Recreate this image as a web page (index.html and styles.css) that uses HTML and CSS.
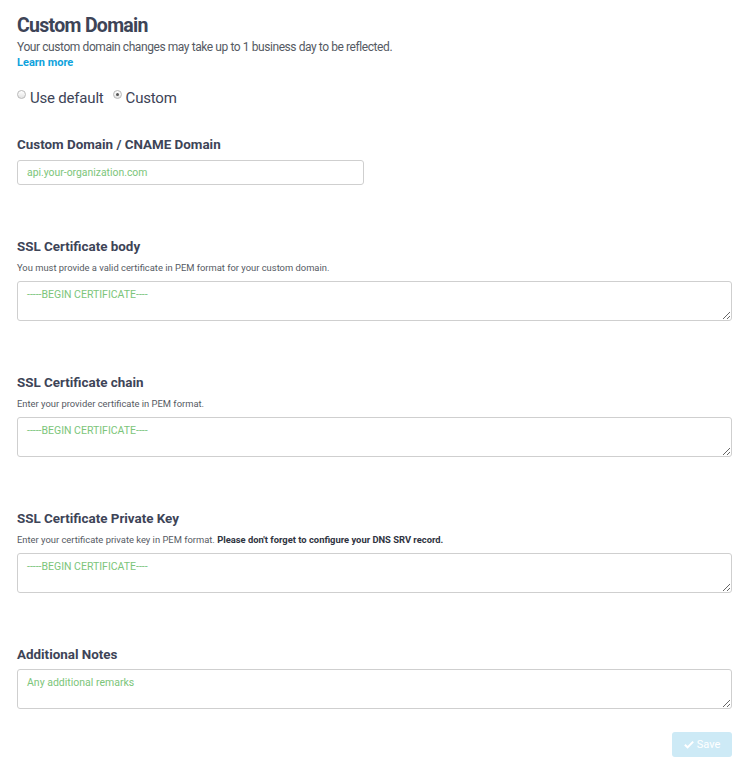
FILE: index.html
```html
<!DOCTYPE html>
<html lang="en">
<head>
<meta charset="utf-8">
<title>Custom Domain</title>
<link rel="stylesheet" href="styles.css">
</head>
<body>
<div class="page">
  <h1 class="title">Custom Domain</h1>
  <p class="intro">Your custom domain changes may take up to 1 business day to be reflected.</p>
  <a class="learn" href="#">Learn more</a>

  <div class="radios">
    <label class="radio"><input type="radio" name="mode"><span>Use default</span></label>
    <label class="radio"><input type="radio" name="mode" checked><span>Custom</span></label>
  </div>

  <div class="field first">
    <label class="flabel">Custom Domain / CNAME Domain</label>
    <input class="text" type="text" placeholder="api.your-organization.com">
  </div>

  <div class="field">
    <label class="flabel">SSL Certificate body</label>
    <p class="help">You must provide a valid certificate in PEM format for your custom domain.</p>
    <textarea class="area" placeholder="-----BEGIN CERTIFICATE----"></textarea>
  </div>

  <div class="field">
    <label class="flabel">SSL Certificate chain</label>
    <p class="help">Enter your provider certificate in PEM format.</p>
    <textarea class="area" placeholder="-----BEGIN CERTIFICATE----"></textarea>
  </div>

  <div class="field">
    <label class="flabel">SSL Certificate Private Key</label>
    <p class="help">Enter your certificate private key in PEM format. <strong>Please don't forget to configure your DNS SRV record.</strong></p>
    <textarea class="area" placeholder="-----BEGIN CERTIFICATE----"></textarea>
  </div>

  <div class="field">
    <label class="flabel">Additional Notes</label>
    <textarea class="area" placeholder="Any additional remarks"></textarea>
  </div>

  <div class="actions">
    <button class="save" type="button" disabled>
      <svg class="check" viewBox="0 0 12 10" width="10" height="9" aria-hidden="true"><path d="M1 5.2 L4.3 8.4 L11 1.6" fill="none" stroke="#fff" stroke-width="2.4"/></svg>
      <span>Save</span>
    </button>
  </div>
</div>
</body>
</html>
```
FILE: styles.css
```css
* { box-sizing: border-box; }
html, body { margin: 0; padding: 0; background: #fff; }
body {
  font-family: Roboto, "Liberation Sans", Arial, sans-serif;
  color: #3d4457;
}
.page {
  padding: 14px 17px 20px 17px;
  display: flex;
  flex-direction: column;
  align-items: flex-start;
}
.title {
  margin: 0;
  font-size: 19.5px;
  line-height: 24px;
  font-weight: 700;
  letter-spacing: -0.7px;
  color: #3d4457;
}
.intro {
  margin: 1px 0 0 0;
  font-size: 12px;
  line-height: 16px;
  letter-spacing: -0.42px;
  color: #555a63;
}
.learn {
  font-size: 11px;
  line-height: 16px;
  font-weight: 700;
  color: #0ea2dc;
  text-decoration: none;
}
.radios {
  margin-top: 17px;
  display: flex;
  gap: 9px;
}
.radio {
  display: flex;
  align-items: flex-start;
  gap: 4px;
  font-size: 15px;
  line-height: 20px;
  letter-spacing: -0.2px;
  color: #3d4457;
}
.radio input {
  appearance: none;
  -webkit-appearance: none;
  margin: 2px 0 0 0;
  width: 9px;
  height: 9px;
  border-radius: 50%;
  border: 1px solid #b9b9b9;
  background: linear-gradient(#ffffff, #e3e3e3);
  position: relative;
}
.radio input:checked::after {
  content: "";
  position: absolute;
  left: 2px;
  top: 2px;
  width: 3px;
  height: 3px;
  border-radius: 50%;
  background: #555;
}
.field {
  align-self: stretch;
  display: flex;
  flex-direction: column;
  margin-top: 53px;
}
.field.first { margin-top: 28px; }
.flabel {
  font-size: 13.4px;
  line-height: 18px;
  font-weight: 700;
  color: #3d4457;
}
.help {
  margin: 5px 0 0 0;
  font-size: 9.4px;
  line-height: 13px;
  color: #555a63;
}
.help strong { color: #2f3441; }
.text {
  margin-top: 6px;
  width: 347px;
  height: 25px;
  border: 1px solid #cfcfcf;
  border-radius: 3px;
  padding: 0 9px;
  font-family: inherit;
  font-size: 10.4px;
  color: #333;
  outline: none;
}
.area {
  margin-top: 7px;
  width: 100%;
  height: 40px;
  border: 1px solid #cfcfcf;
  border-radius: 3px;
  padding: 6px 9px;
  font-family: inherit;
  font-size: 10.5px;
  line-height: 13px;
  color: #333;
  resize: vertical;
  outline: none;
}
.flabel + .area { margin-top: 5px; }
.text::placeholder, .area::placeholder { color: #7cc57a; opacity: 1; }
.actions {
  align-self: stretch;
  display: flex;
  justify-content: flex-end;
  margin-top: 23px;
}
.save {
  width: 60px;
  height: 25px;
  border: none;
  border-radius: 3px;
  background: #cdeaf6;
  color: #fff;
  font-family: inherit;
  font-size: 11px;
  display: flex;
  align-items: center;
  justify-content: center;
  gap: 3px;
  padding: 0;
}
.check { display: block; }
```
